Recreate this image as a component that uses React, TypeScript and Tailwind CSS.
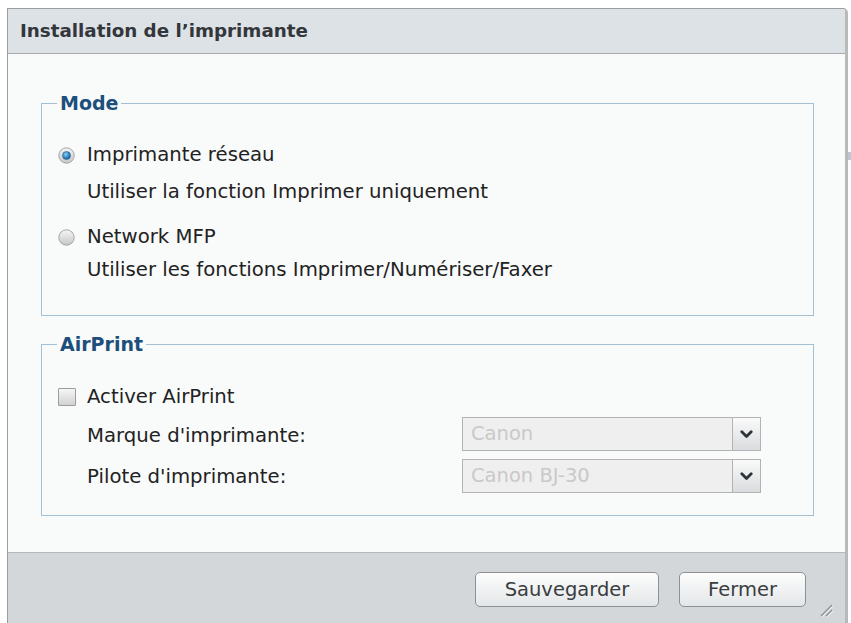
import React from "react";

const font = { fontFamily: '"DejaVu Sans", Verdana, sans-serif' };

function Radio({ checked }: { checked?: boolean }) {
  const gid = checked ? "rg1" : "rg2";
  return (
    <svg width="17" height="17" viewBox="0 0 17 17" className="shrink-0">
      <defs>
        <linearGradient id={gid} x1="0" y1="0" x2="0" y2="1">
          <stop offset="0" stopColor="#f6f6f6" />
          <stop offset="1" stopColor="#c6c6c6" />
        </linearGradient>
        <radialGradient id="dot" cx="0.4" cy="0.35" r="0.7">
          <stop offset="0" stopColor="#8fd0f5" />
          <stop offset="0.6" stopColor="#2f86c4" />
          <stop offset="1" stopColor="#1a5a8f" />
        </radialGradient>
      </defs>
      <circle cx="8.5" cy="8.5" r="7.7" fill={`url(#${gid})`} stroke="#a3a3a3" strokeWidth="1" />
      {checked && <circle cx="8.5" cy="8.5" r="4" fill="url(#dot)" stroke="#2a5f8a" strokeWidth="0.6" />}
    </svg>
  );
}

function Checkbox() {
  return (
    <div className="w-[18px] h-[18px] shrink-0 border border-[#9c9c9c] rounded-[1px] bg-gradient-to-b from-[#f6f6f6] to-[#d2d2d2]" />
  );
}

function Chevron() {
  return (
    <svg width="13" height="9" viewBox="0 0 13 9">
      <path d="M1.8 1.8 L6.5 6.5 L11.2 1.8" fill="none" stroke="#2e3338" strokeWidth="2.8" strokeLinecap="round" strokeLinejoin="round" />
    </svg>
  );
}

function Select({ value }: { value: string }) {
  return (
    <div className="flex w-[299px] h-[34px] border border-[#b3b3b3] bg-[#efefef]">
      <div className="flex-1 flex items-center pl-[8px] text-[19.5px] text-[#c9c9c9]">{value}</div>
      <div className="w-[28px] h-full border-l border-[#b3b3b3] bg-gradient-to-b from-[#fafafa] to-[#d9dcde] flex items-center justify-center">
        <Chevron />
      </div>
    </div>
  );
}

function Button({ label, w }: { label: string; w: string }) {
  return (
    <button
      className={`${w} h-[35px] rounded-[5px] border border-[#8c9196] bg-gradient-to-b from-[#fdfdfd] to-[#e3e6e8] text-[19.5px] text-[#3a3d40]`}
    >
      {label}
    </button>
  );
}

export default function App() {
  return (
    <div className="relative w-[851px] h-[623px] bg-white overflow-hidden text-[#222]" style={font}>
      <div className="absolute left-[848px] top-[152px] w-[3px] h-[8px] bg-[#8da3b8] opacity-60" />
      <div className="ml-[7px] mt-[8px] w-[841px] h-[615px] flex flex-col border-t border-l border-[#9d9d9d] border-r-[3px] border-r-[#b9b9b9] rounded-tr-[5px] overflow-hidden">
        {/* Title bar */}
        <div className="h-[45px] shrink-0 bg-[#dde2e6] border-b border-[#a7abaf] flex items-center pl-[12px]">
          <span className="text-[18.3px] font-bold text-[#33363a]">Installation de l’imprimante</span>
        </div>
        {/* Body */}
        <div className="flex-1 bg-[#f9fafa] pl-[33px] pr-[31px] pt-[39px]">
          <fieldset className="border border-[#a3bfd3] pb-[30px]">
            <legend className="ml-[15px] px-[3px] h-[20px] leading-[20px] text-[19px] font-bold text-[#1d4f7c]">Mode</legend>
            <div className="pl-[45px]">
              <div className="mt-[27px] h-[30px] flex items-center -ml-[29px] gap-[12px]">
                <Radio checked />
                <span className="text-[19.7px]">Imprimante réseau</span>
              </div>
              <div className="mt-[7px] h-[30px] flex items-center text-[19.7px]">Utiliser la fonction Imprimer uniquement</div>
              <div className="mt-[15px] h-[30px] flex items-center -ml-[29px] gap-[12px]">
                <Radio />
                <span className="text-[19.7px]">Network MFP</span>
              </div>
              <div className="mt-[3px] h-[30px] flex items-center text-[19.7px]">Utiliser les fonctions Imprimer/Numériser/Faxer</div>
            </div>
          </fieldset>
          <fieldset className="mt-[18px] border border-[#a3bfd3] pb-[22px]">
            <legend className="ml-[15px] px-[3px] h-[20px] leading-[20px] text-[19px] font-bold text-[#1d4f7c]">AirPrint</legend>
            <div className="pl-[45px]">
              <div className="mt-[28px] h-[30px] flex items-center -ml-[29px] gap-[11px]">
                <Checkbox />
                <span className="text-[19.7px]">Activer AirPrint</span>
              </div>
              <div className="mt-[5px] flex items-center">
                <span className="w-[375px] text-[19.7px] pt-[4px]">Marque d'imprimante:</span>
                <Select value="Canon" />
              </div>
              <div className="mt-[8px] flex items-center">
                <span className="w-[375px] text-[19.7px] pt-[2px]">Pilote d'imprimante:</span>
                <Select value="Canon BJ-30" />
              </div>
            </div>
          </fieldset>
        </div>
        {/* Footer */}
        <div className="relative h-[71px] shrink-0 bg-[#d3d7da] border-t border-[#b4b8bc] flex items-start justify-end pt-[19px] pr-[39px] gap-[20px]">
          <Button label="Sauvegarder" w="w-[184px]" />
          <Button label="Fermer" w="w-[127px]" />
          <svg className="absolute right-[12px] bottom-[6px]" width="14" height="14" viewBox="0 0 14 14">
            <path d="M2 13 L13 2 M7 13 L13 7" stroke="#8a8e92" strokeWidth="1.2" />
            <path d="M3 14 L14 3 M8 14 L14 8" stroke="#f2f2f2" strokeWidth="1" />
          </svg>
        </div>
      </div>
    </div>
  );
}
